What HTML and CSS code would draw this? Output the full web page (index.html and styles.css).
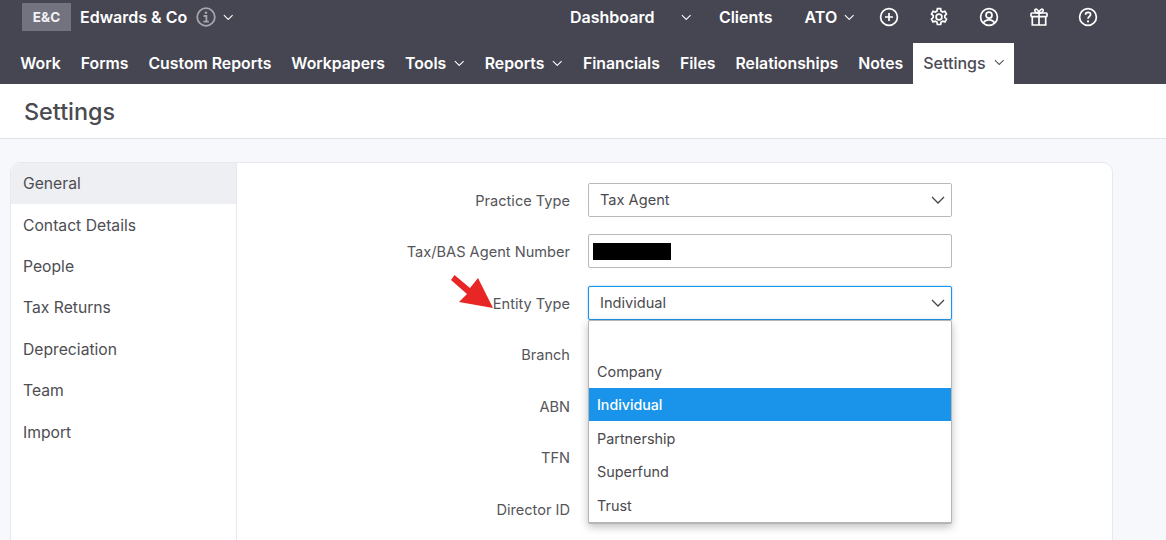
FILE: index.html
```html
<!DOCTYPE html>
<html lang="en">
<head>
<meta charset="utf-8">
<title>Settings</title>
<link rel="stylesheet" href="styles.css">
</head>
<body>
<header class="header">
  <div class="top-row">
    <div class="client">
      <span class="badge">E&amp;C</span>
      <span class="client-name">Edwards &amp; Co</span>
      <svg class="info" viewBox="0 0 20 20"><circle cx="10" cy="10" r="8.8"/><circle class="dot" cx="10" cy="5.8" r="1.3"/><path d="M7.6 9h2.8v5.400M7.400 14.600h5.400"/></svg>
      <svg class="chev chev-client" viewBox="0 0 12 7"><path d="M1 1l5 5 5-5"/></svg>
    </div>
    <nav class="top-nav">
      <span class="top-link">Dashboard</span>
      <svg class="chev chev-dash" viewBox="0 0 12 7"><path d="M1 1l5 5 5-5"/></svg>
      <span class="top-link clients">Clients</span>
      <span class="top-link ato">ATO</span>
      <svg class="chev chev-ato" viewBox="0 0 12 7"><path d="M1 1l5 5 5-5"/></svg>
      <svg class="tool tool-first" viewBox="0 0 20 20"><circle cx="10" cy="10" r="8.4"/><path d="M10 6v8M6 10h8"/></svg>
      <svg class="tool" viewBox="0 0 20 20"><path d="M8.400 1.700h3.200l.5 2.400 1.500.9 2.300-.7 1.600 2.800-1.700 1.600v1.800l1.700 1.600-1.600 2.800-2.300-.7-1.500.9-.5 2.400H8.400l-.5-2.400-1.500-.9-2.300.7-1.600-2.800 1.700-1.600V8.700L2.500 7.100l1.600-2.800 2.300.7 1.500-.9z"/><circle cx="10" cy="10" r="2.900"/></svg>
      <svg class="tool" viewBox="0 0 20 20"><circle cx="10" cy="10" r="8.400"/><circle cx="10" cy="8.200" r="3"/><path d="M4.500 16c1-2.300 3-3.200 5.500-3.200s4.500.9 5.500 3.200"/></svg>
      <svg class="tool" viewBox="0 0 20 20"><rect x="2" y="6" width="16" height="3.600" rx=".8"/><path d="M3.300 9.600V18h13.400V9.600M10 6v12M10 6C8 6 5.800 5.300 5.800 3.500c0-2 3.200-2.200 4.200 2.500 1-4.700 4.200-4.500 4.200-2.500C14.200 5.300 12 6 10 6z"/></svg>
      <svg class="tool" viewBox="0 0 20 20"><circle cx="10" cy="10" r="8.400"/><path d="M7.500 7.700c0-1.500 1.200-2.400 2.600-2.400s2.500.9 2.500 2.200c0 2-2.600 2-2.600 4.200"/><circle class="dot" cx="10" cy="14.400" r="1.100"/></svg>
    </nav>
  </div>
  <nav class="main-nav">
    <span class="main-link">Work</span>
    <span class="main-link">Forms</span>
    <span class="main-link">Custom Reports</span>
    <span class="main-link">Workpapers</span>
    <span class="main-link">Tools<svg class="chev" viewBox="0 0 12 7"><path d="M1 1l5 5 5-5"/></svg></span>
    <span class="main-link">Reports<svg class="chev" viewBox="0 0 12 7"><path d="M1 1l5 5 5-5"/></svg></span>
    <span class="main-link">Financials</span>
    <span class="main-link">Files</span>
    <span class="main-link">Relationships</span>
    <span class="main-link">Notes</span>
    <span class="main-link active">Settings<svg class="chev" viewBox="0 0 12 7"><path d="M1 1l5 5 5-5"/></svg></span>
  </nav>
</header>

<div class="title-bar"><h1>Settings</h1></div>

<main class="content">
  <section class="card">
    <aside class="side">
      <div class="side-item current">General</div>
      <div class="side-item">Contact Details</div>
      <div class="side-item">People</div>
      <div class="side-item">Tax Returns</div>
      <div class="side-item">Depreciation</div>
      <div class="side-item">Team</div>
      <div class="side-item">Import</div>
    </aside>
    <div class="form">
      <div class="row">
        <label class="label">Practice Type</label>
        <div class="control">Tax Agent<svg class="select-chev" viewBox="0 0 14 8"><path d="M1 1l6 6 6-6"/></svg></div>
      </div>
      <div class="row">
        <label class="label">Tax/BAS Agent Number</label>
        <div class="control"><span class="redact"></span></div>
      </div>
      <div class="row row-entity">
        <svg class="arrow" viewBox="0 0 44 36"><path d="M4.500 1L20 14 28 4 43 34 9 28 17 20 1 6z"/></svg>
        <label class="label">Entity Type</label>
        <div class="control focused">Individual<svg class="select-chev" viewBox="0 0 14 8"><path d="M1 1l6 6 6-6"/></svg>
          <ul class="menu">
            <li class="opt blank"></li>
            <li class="opt">Company</li>
            <li class="opt selected">Individual</li>
            <li class="opt">Partnership</li>
            <li class="opt">Superfund</li>
            <li class="opt">Trust</li>
          </ul>
        </div>
      </div>
      <div class="row"><label class="label">Branch</label></div>
      <div class="row"><label class="label">ABN</label></div>
      <div class="row"><label class="label">TFN</label></div>
      <div class="row"><label class="label">Director ID</label></div>
    </div>
  </section>
</main>
</body>
</html>
```
FILE: styles.css
```css
* { box-sizing: border-box; }
html, body { margin: 0; height: 540px; overflow: hidden; }
body { background: #f7f8fb; font-family: Inter, "Liberation Sans", sans-serif; color: #4a4a4f; font-size: 14px; }

.header { background: #464652; height: 84px; color: #fff; }
.top-row { height: 42px; display: flex; }
.client { display: flex; align-items: center; padding-left: 22px; height: 34px; }
.badge { width: 49px; height: 28px; background: #73737f; display: flex; align-items: center; justify-content: center; font-size: 13.500px; font-weight: 700; color: #f2f2f4; }
.client-name { margin-left: 9px; font-size: 16px; font-weight: 600; }
.info { width: 20px; height: 20px; margin-left: 9px; fill: none; stroke: #a5a5ad; stroke-width: 1.800; }
.info .dot { fill: #a5a5ad; stroke: none; }
.chev { width: 10.500px; height: 6.500px; fill: none; stroke: currentColor; stroke-width: 1.200; flex: none; }
.chev-client { margin-left: 7px; }
.top-nav { position: absolute; left: 570px; top: 0; height: 34px; display: flex; align-items: center; }
.top-link { font-size: 16px; font-weight: 600; white-space: nowrap; }
.chev-dash { margin-left: 27px; }
.clients { margin-left: 27px; }
.ato { margin-left: 32px; }
.chev-ato { margin-left: 7px; }
.tool { width: 20px; height: 20px; margin-left: 29.800px; fill: none; stroke: #fff; stroke-width: 1.700; flex: none; }
.tool .dot { fill: #fff; stroke: none; }
.tool-first { margin-left: 24.500px; }

.main-nav { height: 42px; display: flex; padding-left: 10.300px; }
.main-link { display: flex; align-items: center; gap: 8px; padding: 0 10px; font-size: 15.800px; font-weight: 600; white-space: nowrap; height: 42px; }
.main-link.active { background: #fff; color: #4a4a55; font-weight: 500; height: 41px; margin-top: 1px; padding-bottom: 2px; font-size: 16px; }
.main-link.active .chev { color: #55555f; }

.title-bar { height: 55px; background: #fff; border-bottom: 1px solid #e4e4e8; padding: 14px 0 0 24px; }
.title-bar h1 { margin: 0; font-size: 23.400px; line-height: 28px; font-weight: 500; color: #4a4a4f; }

.content { padding: 23px 53px 0 10px; }
.card { height: 400px; background: #fff; border: 1px solid #e8e8ee; border-radius: 10px; display: flex; }
.side { width: 226px; flex: none; border-right: 1px solid #e8e8ee; }
.side-item { height: 41.400px; padding-left: 12px; display: flex; align-items: center; font-size: 15.700px; color: #4d4d52; }
.side-item.current { background: #eeeff3; border-top-left-radius: 10px; }

.form { flex: 1; padding-top: 19.700px; }
.row { display: flex; height: 34px; margin-bottom: 17.500px; align-items: center; position: relative; }
.label { width: 333px; text-align: right; font-size: 14.600px; color: #55555a; padding-top: 2px; }
.control { margin-left: 18px; width: 364px; height: 34px; background: #fff; border: 1px solid #b9b9bd; border-radius: 2px; display: flex; align-items: center; padding-left: 11px; font-size: 14.600px; color: #4a4a4f; position: relative; }
.select-chev { position: absolute; right: 6px; top: 12px; width: 14px; height: 8px; fill: none; stroke: #45454a; stroke-width: 1.300; }
.focused { border-color: #1c94ea; box-shadow: 0 0 2px rgba(28,148,234,.6); }
.redact { width: 78px; height: 17px; background: #000; margin-left: -7px; }
.arrow { position: absolute; left: 213px; top: -12px; width: 44px; height: 36px; fill: #e82626; z-index: 1; }

.menu { position: absolute; left: -1px; top: 33px; width: 364px; height: 204px; margin: 0; padding: 0; list-style: none; background: #fff; border: 1px solid #b5b5b8; border-bottom-width: 2px; border-radius: 2px; box-shadow: 0 3px 8px rgba(0,0,0,.25); z-index: 2; }
.opt { height: 33.500px; padding-left: 8px; display: flex; align-items: center; font-size: 14.400px; color: #4a4a4f; }
.opt.blank { height: 33.800px; }
.opt.selected { background: #1994ea; color: #fff; font-weight: 500; font-size: 14.200px; }
```
